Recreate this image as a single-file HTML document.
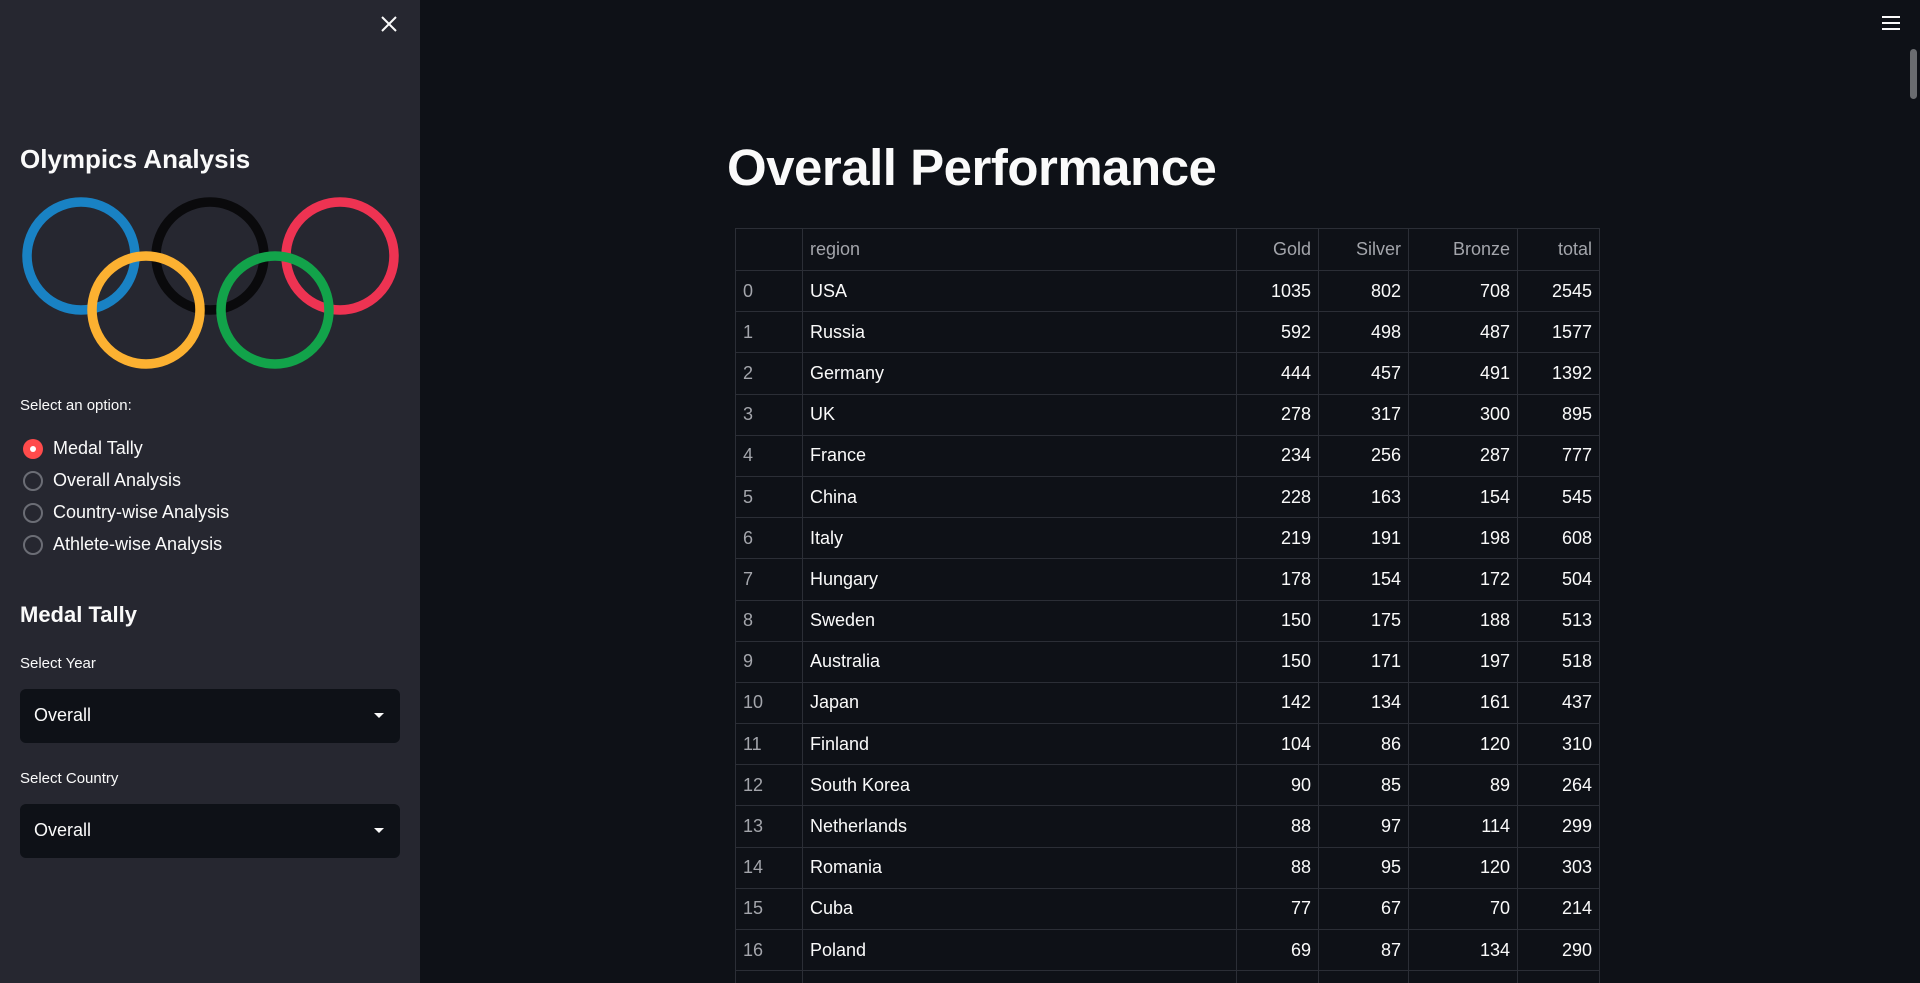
<!DOCTYPE html>
<html style="overflow:hidden;height:983px"><head><meta charset="utf-8"><style>
*{margin:0;padding:0;box-sizing:border-box}
body{width:1920px;height:983px;overflow:hidden;background:#0e1117;font-family:"Liberation Sans",sans-serif;color:#fafafa;position:relative}
.sb{position:absolute;left:0;top:0;width:420px;height:983px;background:#262730}
.abs{position:absolute}
.lbl{font-size:15px;color:#fafafa}
.radio{position:absolute;left:23px;width:20px;height:20px;border-radius:50%;border:2px solid #6b6d75}
.radio.on{background:#ff4b4b;border:none}
.radio.on:after{content:"";position:absolute;left:7px;top:7px;width:6px;height:6px;border-radius:50%;background:#fff}
.rt{position:absolute;left:53px;font-size:18px}
.sel{position:absolute;left:20px;width:380px;height:54px;background:#0e1117;border-radius:6px}
.sel span{position:absolute;left:14px;top:16px;font-size:18px}
.sel i{position:absolute;right:16px;top:24px;width:0;height:0;border-left:5px solid transparent;border-right:5px solid transparent;border-top:5px solid #fafafa}
.wrap{position:absolute;left:735px;top:228px;width:870px;height:755px;overflow:hidden}
table{border-collapse:collapse;table-layout:fixed;font-size:18px}
td,th{border:1px solid #2b2e36;height:41.2px;padding:0 7px;font-weight:normal;white-space:nowrap}
th{height:42px;color:#a3a5ab}
td.i{color:#a3a5ab}
td.n,th.n{text-align:right}
</style></head><body>
<div class="sb">
<svg class="abs" style="left:380px;top:15px" width="18" height="18" viewBox="0 0 18 18"><path d="M2 2L16 16M16 2L2 16" stroke="#fafafa" stroke-width="2"/></svg>
<div class="abs" style="left:20px;top:144px;font-size:26px;font-weight:bold">Olympics Analysis</div>
<svg class="abs" style="left:0;top:0" width="420" height="400">
<g fill="none" stroke-width="9.5">
<circle cx="81" cy="256" r="54" stroke="#1982c4"/>
<circle cx="210" cy="256" r="54" stroke="#0a0a0c"/>
<circle cx="340" cy="256" r="54" stroke="#ee3352"/>
<circle cx="146" cy="310" r="54" stroke="#fcb131"/>
<circle cx="275" cy="310" r="54" stroke="#12a34a"/>
</g></svg>
<div class="abs lbl" style="left:20px;top:397px">Select an option:</div>
<div class="radio on" style="top:439px"></div><div class="rt" style="top:438px">Medal Tally</div>
<div class="radio" style="top:471px"></div><div class="rt" style="top:470px">Overall Analysis</div>
<div class="radio" style="top:503px"></div><div class="rt" style="top:502px">Country-wise Analysis</div>
<div class="radio" style="top:535px"></div><div class="rt" style="top:534px">Athlete-wise Analysis</div>
<div class="abs" style="left:20px;top:602px;font-size:22px;font-weight:bold">Medal Tally</div>
<div class="abs lbl" style="left:20px;top:655px">Select Year</div>
<div class="sel" style="top:689px"><span>Overall</span><i></i></div>
<div class="abs lbl" style="left:20px;top:770px">Select Country</div>
<div class="sel" style="top:804px"><span>Overall</span><i></i></div>
</div>
<svg class="abs" style="left:1881px;top:15px" width="20" height="16"><path d="M1 2H19M1 8H19M1 14H19" stroke="#fafafa" stroke-width="2"/></svg>
<div class="abs" style="left:1910px;top:49px;width:7px;height:50px;border-radius:4px;background:#6a6c70"></div>
<div class="abs" style="left:727px;top:138px;font-size:51px;font-weight:bold;letter-spacing:-0.5px">Overall Performance</div>
<div class="wrap"><table>
<colgroup><col style="width:67px"><col style="width:434px"><col style="width:82px"><col style="width:90px"><col style="width:109px"><col style="width:82px"></colgroup>
<tr><th></th><th style="text-align:left">region</th><th class="n">Gold</th><th class="n">Silver</th><th class="n">Bronze</th><th class="n">total</th></tr>
<tr><td class="i">0</td><td>USA</td><td class="n">1035</td><td class="n">802</td><td class="n">708</td><td class="n">2545</td></tr>
<tr><td class="i">1</td><td>Russia</td><td class="n">592</td><td class="n">498</td><td class="n">487</td><td class="n">1577</td></tr>
<tr><td class="i">2</td><td>Germany</td><td class="n">444</td><td class="n">457</td><td class="n">491</td><td class="n">1392</td></tr>
<tr><td class="i">3</td><td>UK</td><td class="n">278</td><td class="n">317</td><td class="n">300</td><td class="n">895</td></tr>
<tr><td class="i">4</td><td>France</td><td class="n">234</td><td class="n">256</td><td class="n">287</td><td class="n">777</td></tr>
<tr><td class="i">5</td><td>China</td><td class="n">228</td><td class="n">163</td><td class="n">154</td><td class="n">545</td></tr>
<tr><td class="i">6</td><td>Italy</td><td class="n">219</td><td class="n">191</td><td class="n">198</td><td class="n">608</td></tr>
<tr><td class="i">7</td><td>Hungary</td><td class="n">178</td><td class="n">154</td><td class="n">172</td><td class="n">504</td></tr>
<tr><td class="i">8</td><td>Sweden</td><td class="n">150</td><td class="n">175</td><td class="n">188</td><td class="n">513</td></tr>
<tr><td class="i">9</td><td>Australia</td><td class="n">150</td><td class="n">171</td><td class="n">197</td><td class="n">518</td></tr>
<tr><td class="i">10</td><td>Japan</td><td class="n">142</td><td class="n">134</td><td class="n">161</td><td class="n">437</td></tr>
<tr><td class="i">11</td><td>Finland</td><td class="n">104</td><td class="n">86</td><td class="n">120</td><td class="n">310</td></tr>
<tr><td class="i">12</td><td>South Korea</td><td class="n">90</td><td class="n">85</td><td class="n">89</td><td class="n">264</td></tr>
<tr><td class="i">13</td><td>Netherlands</td><td class="n">88</td><td class="n">97</td><td class="n">114</td><td class="n">299</td></tr>
<tr><td class="i">14</td><td>Romania</td><td class="n">88</td><td class="n">95</td><td class="n">120</td><td class="n">303</td></tr>
<tr><td class="i">15</td><td>Cuba</td><td class="n">77</td><td class="n">67</td><td class="n">70</td><td class="n">214</td></tr>
<tr><td class="i">16</td><td>Poland</td><td class="n">69</td><td class="n">87</td><td class="n">134</td><td class="n">290</td></tr>
<tr><td class="i">17</td><td>Canada</td><td class="n">64</td><td class="n">102</td><td class="n">136</td><td class="n">302</td></tr>
</table></div>
</body></html>
